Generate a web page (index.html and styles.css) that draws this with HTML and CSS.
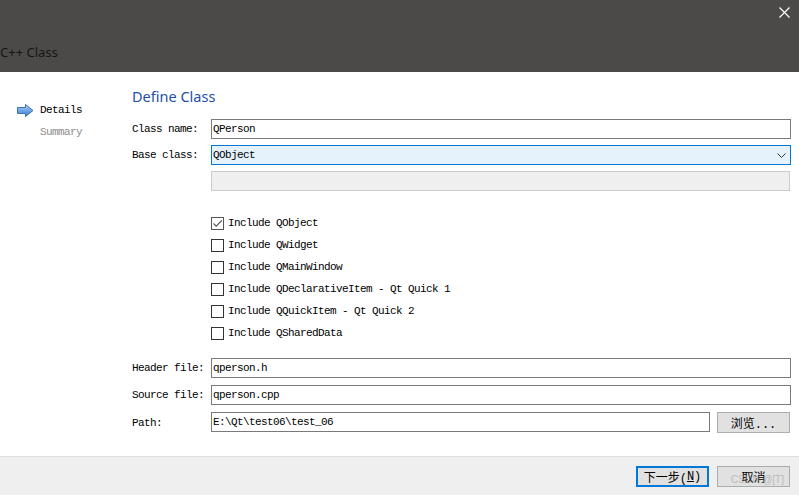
FILE: index.html
```html
<!DOCTYPE html>
<html lang="zh">
<head>
<meta charset="utf-8">
<title>C++ Class</title>
<link rel="stylesheet" href="styles.css">
</head>
<body>
<div class="window">
  <div class="titlebar">
    <div class="close">
      <svg width="11" height="11" viewBox="0 0 11 11"><path d="M0.5 0.5 L10.5 10.5 M10.5 0.5 L0.5 10.5" stroke="#ffffff" stroke-width="1.2" fill="none"/></svg>
    </div>
    <div class="title">C++ Class</div>
  </div>
  <div class="main">
    <div class="sidebar">
      <div class="nav-item active">
        <span class="nav-icon">
          <svg width="17" height="13" viewBox="0 0 17 13">
            <defs>
              <linearGradient id="ag" x1="0" y1="0" x2="0" y2="1">
                <stop offset="0" stop-color="#b9d6f5"/>
                <stop offset="0.5" stop-color="#6fa6e6"/>
                <stop offset="1" stop-color="#3b7fd4"/>
              </linearGradient>
            </defs>
            <path d="M0.5 3.5 H8.5 V0.5 L16 6.5 L8.5 12.5 V9.5 H0.5 Z" fill="url(#ag)" stroke="#3d6fb4" stroke-width="1"/>
          </svg>
        </span>
        <span>Details</span>
      </div>
      <div class="nav-item muted">
        <span class="nav-icon"></span>
        <span>Summary</span>
      </div>
    </div>
    <div class="content">
      <h1 class="heading">Define Class</h1>
      <div class="form top-form">
        <div class="label">Class name:</div>
        <div class="field">QPerson</div>
        <div class="label">Base class:</div>
        <div class="field combo"><span>QObject</span>
          <svg width="9" height="5" viewBox="0 0 9 5"><path d="M0.5 0.5 L4.5 4.5 L8.5 0.5" stroke="#3a3a3a" stroke-width="1" fill="none"/></svg>
        </div>
        <div class="label"></div>
        <div class="field disabled"></div>
      </div>
      <div class="checks">
        <div class="check-row"><span class="box checked"><svg width="11" height="11" viewBox="0 0 11 11"><path d="M1.5 5.5 L4.2 8.2 L9.8 2.5" stroke="#5a5a5a" stroke-width="1.2" fill="none"/></svg></span><span>Include QObject</span></div>
        <div class="check-row"><span class="box"></span><span>Include QWidget</span></div>
        <div class="check-row"><span class="box"></span><span>Include QMainWindow</span></div>
        <div class="check-row"><span class="box"></span><span>Include QDeclarativeItem - Qt Quick 1</span></div>
        <div class="check-row"><span class="box"></span><span>Include QQuickItem - Qt Quick 2</span></div>
        <div class="check-row"><span class="box"></span><span>Include QSharedData</span></div>
      </div>
      <div class="form bottom-form">
        <div class="label">Header file:</div>
        <div class="field">qperson.h</div>
        <div class="label">Source file:</div>
        <div class="field">qperson.cpp</div>
        <div class="label">Path:</div>
        <div class="path-row">
          <div class="field grow">E:\Qt\test06\test_06</div>
          <div class="button browse">浏览...</div>
        </div>
      </div>
    </div>
  </div>
  <div class="footer">
    <div class="button primary">下一步(<u>N</u>)</div>
    <div class="button cancel">取消<span class="watermark">CSDN @[T]</span></div>
  </div>
</div>
</body>
</html>
```
FILE: styles.css
```css
* { box-sizing: border-box; }
html, body { margin: 0; padding: 0; }
body {
  width: 799px;
  height: 495px;
  overflow: hidden;
  background: #ffffff;
  font-family: "Liberation Mono", "Noto Sans CJK SC", monospace;
  font-size: 11px;
  letter-spacing: -0.6px;
  color: #000000;
}
.window {
  display: flex;
  flex-direction: column;
  height: 495px;
}
.titlebar {
  height: 72px;
  background: #4b4a48;
  display: flex;
  flex-direction: column;
}
.close {
  align-self: flex-end;
  width: 11px;
  height: 11px;
  margin: 7px 9px 0 0;
  line-height: 0;
}
.title {
  margin-top: auto;
  padding-bottom: 11px;
  font-family: "Noto Sans", "Open Sans", sans-serif;
  font-size: 13px;
  letter-spacing: 0;
  line-height: 18px;
  color: #151515;
}
.main {
  height: 384px;
  display: flex;
}
.sidebar {
  width: 132px;
  flex: none;
  padding: 27px 0 0 17px;
}
.nav-item {
  display: flex;
  align-items: center;
  gap: 6px;
  height: 22px;
}
.nav-icon {
  width: 17px;
  height: 13px;
  line-height: 0;
}
.nav-item.muted { color: #8c8c8c; }
.content {
  flex: 1;
  padding: 14px 8px 0 0;
}
.heading {
  margin: 0;
  font-family: "Noto Sans", "Open Sans", sans-serif;
  font-weight: normal;
  font-size: 14.5px;
  letter-spacing: 0;
  line-height: 20px;
  color: #1d4fae;
}
.form {
  display: grid;
  grid-template-columns: 79px 1fr;
  align-items: center;
}
.top-form {
  margin-top: 13px;
  row-gap: 6px;
}
.bottom-form {
  margin-top: 14px;
  row-gap: 7px;
}
.label { line-height: 20px; }
.field {
  height: 20px;
  border: 1px solid #7a7a7a;
  background: #ffffff;
  padding: 0 2px 0 1px;
  line-height: 18px;
  white-space: nowrap;
  overflow: hidden;
}
.field.combo {
  border-color: #0078d7;
  background: #e5f1fb;
  display: flex;
  align-items: center;
  justify-content: space-between;
  padding-right: 4px;
}
.field.combo svg { flex: none; }
.field.disabled {
  border-color: #cccccc;
  background: #efefef;
  margin-right: 1px;
}
.checks {
  margin: 21px 0 0 79px;
  display: flex;
  flex-direction: column;
}
.check-row {
  height: 22px;
  display: flex;
  align-items: center;
  gap: 4px;
}
.box {
  width: 13px;
  height: 13px;
  border: 1px solid #333333;
  background: #ffffff;
  flex: none;
  line-height: 0;
}
.box.checked { border-color: #555555; }
.path-row {
  display: flex;
  gap: 7px;
  padding-right: 1px;
}
.field.grow { flex: 1; }
.button {
  height: 21px;
  width: 73px;
  border: 1px solid #adadad;
  background: #e1e1e1;
  display: flex;
  align-items: center;
  justify-content: center;
  font-size: 11px;
  letter-spacing: 0;
  flex: none;
}
.browse { font-size: 12px; }
.footer {
  flex: 1;
  border-top: 1px solid #dfdfdf;
  background: #efefef;
  display: flex;
  justify-content: flex-end;
  align-items: flex-start;
  gap: 8px;
  padding: 9px 9px 0 0;
}
.footer .button {
  width: 73px;
  height: 21px;
  font-size: 12px;
}
.button.primary {
  border: 2px solid #0078d7;
}
.button u { text-decoration: underline; }
.cancel { position: relative; }
.watermark {
  position: absolute;
  right: 5px;
  bottom: 1px;
  font-family: "Liberation Sans", sans-serif;
  font-size: 10px;
  letter-spacing: 0;
  color: rgba(150, 150, 150, 0.55);
}
```
